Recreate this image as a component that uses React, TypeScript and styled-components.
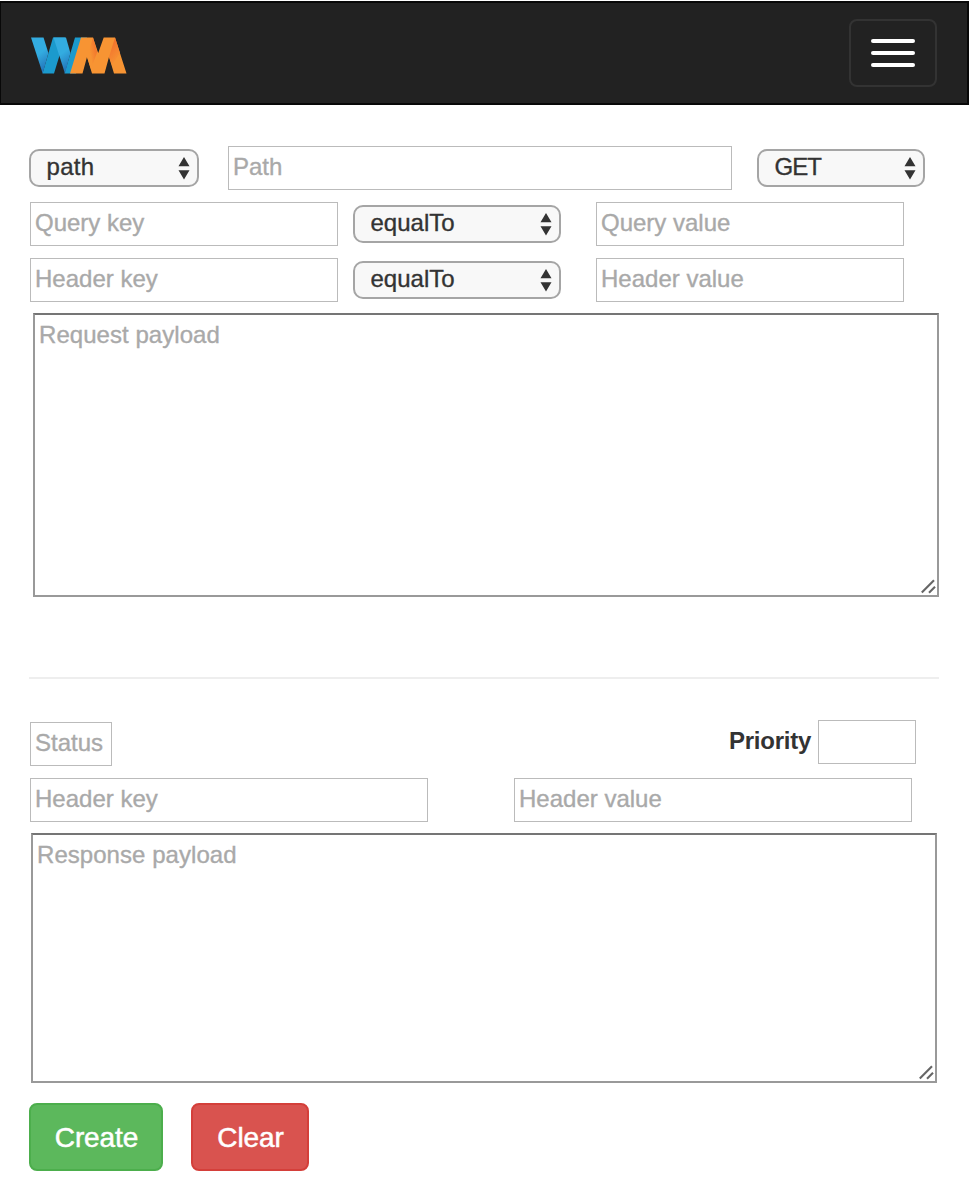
import React from 'react';
import styled, { createGlobalStyle, css } from 'styled-components';

const GlobalStyle = createGlobalStyle`
  *, *::before, *::after { box-sizing: border-box; }
  body {
    margin: 0;
    background: #fff;
    color: #333;
    font-family: 'Liberation Sans', Arial, sans-serif;
    font-size: 24px;
    -webkit-text-stroke-width: 0.35px;
  }
  input, select, textarea, button { font: inherit; margin: 0; }
`;

const Page = styled.div`
  width: 971px;
  height: 1201px;
  padding-top: 1px;
  overflow: hidden;
`;

const Navbar = styled.nav`
  display: flex;
  align-items: center;
  justify-content: space-between;
  width: 969px;
  height: 104px;
  padding: 0 30px;
  background: #222;
  border: 2px solid #080808;
  border-left-width: 1px;
`;

const Logo = styled.svg`
  display: block;
  width: 96px;
  height: 38px;
  margin-top: 3px;
`;

const Toggle = styled.button`
  display: flex;
  flex-direction: column;
  align-items: center;
  justify-content: center;
  gap: 8px;
  width: 88px;
  height: 68px;
  padding: 0;
  background: transparent;
  border: 2px solid #333;
  border-radius: 8px;
`;

const Bar = styled.span`
  width: 44px;
  height: 4px;
  border-radius: 2px;
  background: #fff;
`;

const Form = styled.form`
  display: flex;
  flex-direction: column;
  padding: 41px 32px 0 29px;
`;

const Row = styled.div<{ $height?: number }>`
  display: flex;
  align-items: center;
  height: ${(p) => p.$height ?? 44}px;
  margin-bottom: 12px;
`;

const placeholder = css`
  &::placeholder {
    color: #a9a9a9;
    opacity: 1;
  }
`;

const Input = styled.input<{ $width: number; $left?: number }>`
  flex: none;
  width: ${(p) => p.$width}px;
  height: 44px;
  margin-left: ${(p) => p.$left ?? 0}px;
  padding: 0 4px 3px;
  border: 1px solid #bbb;
  border-radius: 0;
  background: #fff;
  color: #333;
  outline: none;
  ${placeholder}
`;

const SelectBox = styled.div<{ $width: number; $left?: number }>`
  display: flex;
  flex: none;
  align-items: center;
  position: relative;
  width: ${(p) => p.$width}px;
  height: 38px;
  margin-left: ${(p) => p.$left ?? 0}px;
`;

const NativeSelect = styled.select<{ $tracking: number }>`
  width: 100%;
  height: 38px;
  padding: 0 24px 3px 15.5px;
  border: 2px solid #a5a5a5;
  border-radius: 10px;
  background: #f8f8f8;
  color: #333;
  letter-spacing: ${(p) => p.$tracking}px;
  appearance: none;
  outline: none;
`;

const Arrows = styled.svg`
  position: absolute;
  right: 9.5px;
  top: 8px;
  width: 12px;
  height: 23px;
  pointer-events: none;
`;

const PayloadBox = styled.div<{ $height: number; $left: number }>`
  position: relative;
  width: 906px;
  height: ${(p) => p.$height}px;
  margin: -1px 0 0 ${(p) => p.$left}px;
`;

const TextArea = styled.textarea`
  display: block;
  width: 100%;
  height: 100%;
  padding: 6px 4px;
  border: 2px solid #999;
  border-top-color: #757575;
  border-radius: 0;
  background: #fff;
  color: #333;
  line-height: 28px;
  letter-spacing: 0.05px;
  resize: none;
  outline: none;
  ${placeholder}
`;

const Grip = styled.svg`
  position: absolute;
  right: 3px;
  bottom: 3px;
  width: 15px;
  height: 15px;
  pointer-events: none;
`;

const Divider = styled.hr`
  width: 910px;
  height: 2px;
  margin: 80px 0 41px;
  border: 0;
  background: #eee;
`;

const PriorityGroup = styled.label`
  display: flex;
  align-items: center;
  align-self: flex-start;
  height: 44px;
  margin: 0 23px 0 auto;
  font-weight: bold;
  letter-spacing: -0.25px;
  -webkit-text-stroke-width: 0;
`;

const PriorityText = styled.span`
  padding-bottom: 3px;
`;

const StatusSlot = styled.div`
  display: flex;
  align-self: flex-end;
`;

const Actions = styled.div`
  display: flex;
  gap: 28px;
  margin-top: 20px;
`;

const Button = styled.button<{ $width: number; $fill: string; $edge: string }>`
  width: ${(p) => p.$width}px;
  height: 68px;
  padding: 1px 0 0 1px;
  border: 2px solid ${(p) => p.$edge};
  border-radius: 8px;
  background: ${(p) => p.$fill};
  color: #fff;
  font-size: 28px;
  letter-spacing: -0.1px;
  -webkit-text-stroke-width: 0.5px;
`;

type SelectProps = { value: string; width: number; left?: number; tracking?: number };

function Select({ value, width, left, tracking = 0 }: SelectProps) {
  return (
    <SelectBox $width={width} $left={left}>
      <NativeSelect defaultValue={value} $tracking={tracking}>
        <option>{value}</option>
      </NativeSelect>
      <Arrows viewBox="0 0 12 23" fill="#333">
        <path d="M6 0 11.5 9.3H.5ZM.5 13.2h11L6 22.5Z" />
      </Arrows>
    </SelectBox>
  );
}

function Payload({ hint, height, left }: { hint: string; height: number; left: number }) {
  return (
    <PayloadBox $height={height} $left={left}>
      <TextArea placeholder={hint} />
      <Grip viewBox="0 0 15 15" stroke="#666" strokeWidth="2.1">
        <path d="M.8 13.4 13 1.2M8 13.8 14 7.8" />
      </Grip>
    </PayloadBox>
  );
}

function WmLogo() {
  return (
    <Logo viewBox="0 0 96 38">
      <defs>
        <linearGradient id="blueFold" x1="0" y1="0" x2="0.35" y2="1">
          <stop offset="0.55" stopColor="#33ace0" />
          <stop offset="1" stopColor="#2478bd" />
        </linearGradient>
        <linearGradient id="orangeFold" x1="0.3" y1="0" x2="0.7" y2="0.9">
          <stop offset="0" stopColor="#f16b2c" />
          <stop offset="1" stopColor="#f79433" />
        </linearGradient>
        <linearGradient id="orangeEdge" x1="1" y1="0.1" x2="0.3" y2="0.5">
          <stop offset="0" stopColor="#f16b2c" />
          <stop offset="1" stopColor="#f79433" />
        </linearGradient>
      </defs>
      <path fill="#1b9acd" d="M11.5 37.5 22 1.5H34L23 37.5Z M33.5 37.5 44 1.5H56L45 37.5Z" />
      <path fill="url(#blueFold)" d="M0 1.5H12.5L17.4 17 11.7 37.5Z" />
      <path fill="url(#blueFold)" d="M22.5 1.5H35L39.4 17 34 37.5Z" />
      <path
        fill="#f79433"
        d="M39 37.5 50 1.5H62L67.2 17 72.7 1.5H84L95.5 37.5H83L78 21 73.5 37.5H61L56 21 51.5 37.5Z"
      />
      <path fill="url(#orangeEdge)" d="M62 1.5 56 21 60 33 66.2 16Z" />
      <path fill="url(#orangeFold)" d="M84 1.5 78 21 81 29 89 17Z" />
    </Logo>
  );
}

export default function App() {
  return (
    <Page>
      <GlobalStyle />
      <Navbar>
        <WmLogo />
        <Toggle type="button" aria-label="Menu">
          <Bar />
          <Bar />
          <Bar />
        </Toggle>
      </Navbar>
      <Form>
        <Row>
          <Select value="path" width={170} tracking={0.3} />
          <Input placeholder="Path" $width={504} $left={29} />
          <Select value="GET" width={168} left={25} tracking={-1} />
        </Row>
        <Row>
          <Input placeholder="Query key" $width={308} $left={1} />
          <Select value="equalTo" width={208} left={15} />
          <Input placeholder="Query value" $width={308} $left={35} />
        </Row>
        <Row>
          <Input placeholder="Header key" $width={308} $left={1} />
          <Select value="equalTo" width={208} left={15} />
          <Input placeholder="Header value" $width={308} $left={35} />
        </Row>
        <Payload hint="Request payload" height={284} left={4} />
        <Divider />
        <Row $height={46}>
          <StatusSlot>
            <Input placeholder="Status" $width={82} $left={1} />
          </StatusSlot>
          <PriorityGroup>
            <PriorityText>Priority</PriorityText>
            <Input aria-label="Priority" $width={98} $left={7} />
          </PriorityGroup>
        </Row>
        <Row>
          <Input placeholder="Header key" $width={398} $left={1} />
          <Input placeholder="Header value" $width={398} $left={86} />
        </Row>
        <Payload hint="Response payload" height={250} left={2} />
        <Actions>
          <Button type="button" $width={134} $fill="#5cb85c" $edge="#4cae4c">
            Create
          </Button>
          <Button type="button" $width={118} $fill="#d9534f" $edge="#d43f3a">
            Clear
          </Button>
        </Actions>
      </Form>
    </Page>
  );
}
